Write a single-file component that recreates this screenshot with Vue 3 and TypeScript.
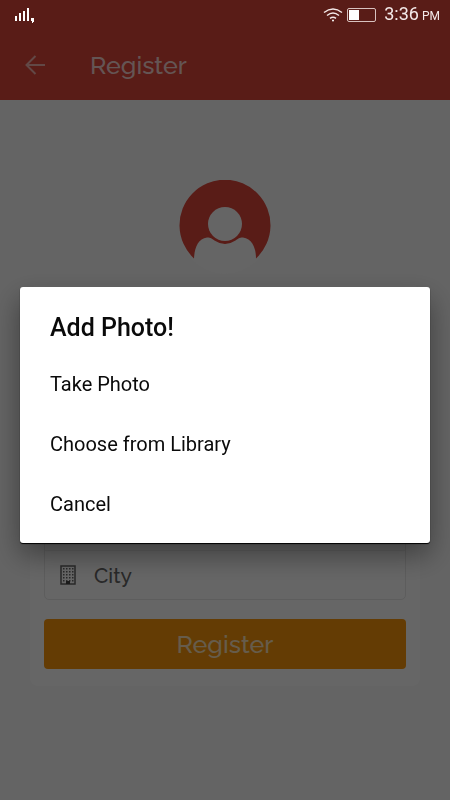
<script setup lang="ts">
import { ref } from 'vue'

const options: string[] = ['Take Photo', 'Choose from Library', 'Cancel']
const city = ref('')
const windowDots: { x: number; y: number }[] = []
for (let row = 0; row < 5; row++) {
  for (let col = 0; col < 4; col++) {
    windowDots.push({ x: 3 + col * 3, y: 3 + row * 3 })
  }
}
</script>

<template>
  <div class="screen">
    <header class="top">
      <div class="app-bar">
        <button class="back" type="button" aria-label="Back">
          <svg width="20" height="20" viewBox="0 0 20 20" fill="none" stroke="currentColor" stroke-width="2">
            <path d="M20 10H1.5M10.5 1L1.5 10l9 9" />
          </svg>
        </button>
        <h1 class="heading">Register</h1>
      </div>
    </header>

    <main class="content">
      <svg class="avatar" width="92" height="96" viewBox="0 0 92 96" aria-hidden="true">
        <circle cx="46" cy="49" r="45" fill="#fcfcfc" />
        <path
          d="M15 78.500A45.500 45.500 0 1 1 77 78.500C77 68 73 58.500 64 57.500C60 57.500 58.500 59 56.500 60.500Q46 67.500 35.500 60.500C33.500 59 32 57.500 28 57.500C19 58.500 15.500 68 15 78.500Z"
          fill="#df463a"
        />
        <circle cx="46" cy="44" r="17" fill="#fcfcfc" />
      </svg>

      <form class="card" @submit.prevent>
        <div class="fields">
          <label class="field">
            <svg width="16" height="20" viewBox="0 0 16 20" aria-hidden="true">
              <rect x="1" y="1" width="14" height="18" fill="none" stroke="#666666" stroke-width="1.500" />
              <rect
                v-for="dot in windowDots"
                :key="`${dot.x}-${dot.y}`"
                :x="dot.x"
                :y="dot.y"
                width="1.500"
                height="1.500"
                fill="#666666"
              />
              <path d="M6 16h4v3H6z" fill="#444444" />
            </svg>
            <input v-model="city" type="text" placeholder="City" aria-label="City" />
          </label>
        </div>
        <button class="submit" type="submit">Register</button>
      </form>
    </main>

    <div class="overlay">
      <div class="status">
        <svg width="20" height="16" viewBox="0 0 20 16" fill="#ffffff" aria-hidden="true">
          <path d="M0 9h2v5H0zM4 6h2v8H4zM8 4h2v10H8zM12 1h2v13h-2zM16 11h3v4h-1v1h-1v-2h-1z" />
        </svg>
        <div class="status-right">
          <svg width="20" height="14" viewBox="0 0 20 14" fill="none" stroke="#f3e9e8" stroke-width="1.500" aria-hidden="true">
            <path d="M1 4.500Q10-2.500 19 4.500M4 7.500Q10 2.500 16 7.500M7 10.300Q10 8 13 10.300" />
            <circle cx="10" cy="12.500" r="1" fill="#ffffff" stroke="none" />
          </svg>
          <svg width="29" height="14" viewBox="0 0 29 14" aria-hidden="true">
            <rect x="0.500" y="0.500" width="28" height="13" rx="1.500" fill="none" stroke="#d8c2bf" />
            <rect x="2" y="2" width="10" height="10" fill="#ffffff" />
          </svg>
          <span class="clock"><span>3:36</span><small>PM</small></span>
        </div>
      </div>
      <div class="dialog-area">
        <section class="dialog" role="dialog" aria-labelledby="dialog-title">
          <h2 id="dialog-title" class="dialog-title">Add Photo!</h2>
          <button v-for="option in options" :key="option" class="option" type="button">{{ option }}</button>
        </section>
      </div>
    </div>
  </div>
</template>

<style>
body {
  background: #fafafa;
}
</style>

<style scoped>
* {
  box-sizing: border-box;
}
.screen {
  min-height: 100vh;
  background: #fafafa;
  font-family: Raleway, Lato, sans-serif;
}
button {
  border: 0;
  background: none;
  font: inherit;
  cursor: pointer;
}
.top {
  padding-top: 30px;
  background: #df463a;
}
.app-bar {
  display: flex;
  align-items: center;
  gap: 45px;
  height: 70px;
  padding-left: 25px;
}
.back {
  display: flex;
  padding: 0;
  color: #f4b4ae;
}
.heading {
  margin: 0;
  font-size: 25px;
  font-weight: 500;
  line-height: 32px;
  color: #fbd5d2;
}
.content {
  display: flex;
  flex-direction: column;
  align-items: center;
  padding: 80px 30px 0;
}
.avatar {
  flex: none;
}
.card {
  width: 100%;
  margin-top: 9px;
  padding: 14px 14px 17px;
  border-radius: 8px;
  background: #ffffff;
}
.fields {
  padding-top: 250px;
  border: 1px solid #e8e8e8;
  border-radius: 5px;
}
.field {
  display: flex;
  align-items: center;
  gap: 18px;
  height: 49px;
  padding: 0 15px;
  border-top: 1px solid #eeeeee;
}
.field input {
  flex: 1;
  min-width: 0;
  padding: 0;
  border: 0;
  outline: 0;
  background: transparent;
  font: inherit;
  font-size: 21px;
  font-weight: 500;
  color: #666666;
}
.field input::placeholder {
  color: #666666;
  opacity: 1;
}
.submit {
  display: block;
  width: 100%;
  height: 50px;
  margin-top: 19px;
  padding: 0;
  border-radius: 4px;
  background: #fa960a;
  font-size: 25px;
  font-weight: 500;
  color: #ffe6bd;
}
.overlay {
  position: fixed;
  inset: 0;
  display: flex;
  flex-direction: column;
  background: rgba(0, 0, 0, 0.6);
  font-family: Roboto, sans-serif;
}
.status {
  display: flex;
  align-items: center;
  justify-content: space-between;
  height: 30px;
  padding: 0 10px 0 15px;
}
.status-right {
  display: flex;
  align-items: center;
  gap: 4px;
}
.clock {
  display: flex;
  align-items: baseline;
  gap: 3px;
  margin-left: 4px;
  font-size: 18px;
  line-height: 32px;
  color: #f3e9e8;
}
.clock small {
  font-size: 12px;
}
.dialog-area {
  flex: 1;
  display: flex;
  align-items: center;
  padding: 0 20px;
}
.dialog {
  flex: 1;
  padding: 21px 0 9px;
  border-radius: 3px;
  background: #ffffff;
  box-shadow: 0 1px 1px #000000, 0 12px 28px rgba(0, 0, 0, 0.4);
}
.dialog-title {
  margin: 0;
  padding: 0 30px 6px;
  font-size: 25px;
  font-weight: 500;
  line-height: 40px;
  color: #0a0a0a;
}
.option {
  display: block;
  width: 100%;
  height: 60px;
  padding: 0 30px;
  font-size: 20px;
  text-align: left;
  color: #0a0a0a;
}
</style>
